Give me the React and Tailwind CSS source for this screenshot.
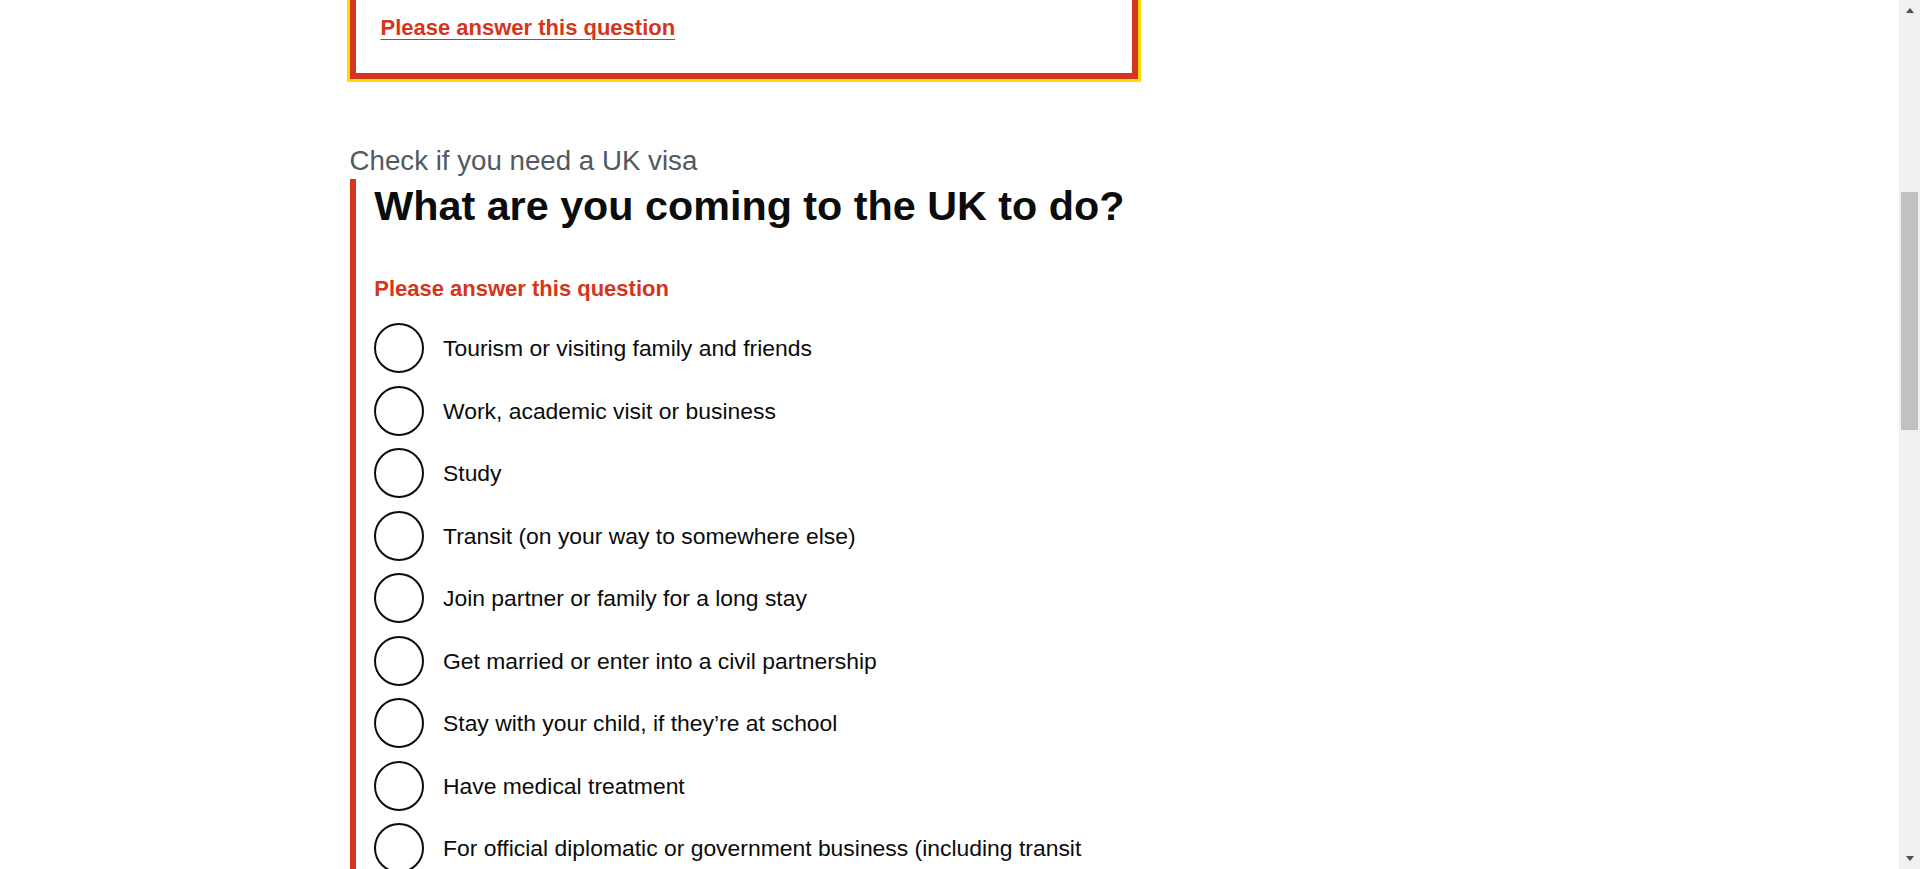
const options = [
  'Tourism or visiting family and friends',
  'Work, academic visit or business',
  'Study',
  'Transit (on your way to somewhere else)',
  'Join partner or family for a long stay',
  'Get married or enter into a civil partnership',
  'Stay with your child, if they\u2019re at school',
  'Have medical treatment',
  'For official diplomatic or government business (including transit through the UK)',
]

function Scrollbar() {
  return (
    <div className="w-[21px] h-[869px] shrink-0 bg-[#f1f1f1] flex flex-col">
      <div className="h-[21px] flex items-center justify-center">
        <div className="w-0 h-0 border-l-[4.5px] border-r-[4.5px] border-b-[5px] border-l-transparent border-r-transparent border-b-[#505050]" />
      </div>
      <div className="flex-1 px-[2px]">
        <div className="mt-[171px] h-[238px] bg-[#c1c1c1]" />
      </div>
      <div className="h-[21px] flex items-center justify-center">
        <div className="w-0 h-0 border-l-[4.5px] border-r-[4.5px] border-t-[5px] border-l-transparent border-r-transparent border-t-[#505050]" />
      </div>
    </div>
  )
}

function Radio({ label }) {
  return (
    <div className="flex items-start min-h-[50px]">
      <div className="w-[50px] h-[50px] shrink-0 rounded-full border-[2.5px] border-[#0b0c0c] bg-white" />
      <label className="pl-[18.75px] pr-[18.75px] mt-[10.2px] text-[22.9px] leading-[31.25px] text-[#0b0c0c]">
        {label}
      </label>
    </div>
  )
}

export default function App() {
  return (
    <div className="flex w-[1920px] h-[869px] overflow-hidden bg-white font-['Liberation_Sans',Arial,sans-serif]">
      <div className="flex-1 h-[869px] overflow-hidden">
        <div className="w-[1200px] mx-auto">
          <div className="w-[788px]">
            {/* error summary, scrolled so only its lower part shows */}
            <div className="-mt-[60px] border-[6px] border-[#d4351c] outline-[3px] outline-solid outline-[#ffdd00] px-[25px] pt-[66px] pb-[30px]">
              <ul>
                <li className="text-[22px] leading-[31px] font-bold">
                  <a href="#q" className="text-[#d4351c] underline decoration-[1.25px] underline-offset-[4px]">
                    Please answer this question
                  </a>
                </li>
              </ul>
            </div>

            <span className="block mt-[64px] text-[27.7px] leading-[36px] text-[#505a5f]">
              Check if you need a UK visa
            </span>

            <div className="border-l-[6px] border-[#d4351c] pl-[18.75px] h-[700px]">
              <fieldset>
                <legend>
                  <h1 className="text-[41.3px] leading-[54px] font-bold text-[#0b0c0c] whitespace-nowrap">
                    What are you coming to the UK to do?
                  </h1>
                </legend>
                <p className="mt-[40px] text-[22px] leading-[31px] font-bold text-[#d4351c]">
                  Please answer this question
                </p>
                <div className="mt-[19px] flex flex-col gap-[12.5px]">
                  {options.map(o => (
                    <Radio key={o} label={o} />
                  ))}
                </div>
              </fieldset>
            </div>
          </div>
        </div>
      </div>
      <Scrollbar />
    </div>
  )
}
